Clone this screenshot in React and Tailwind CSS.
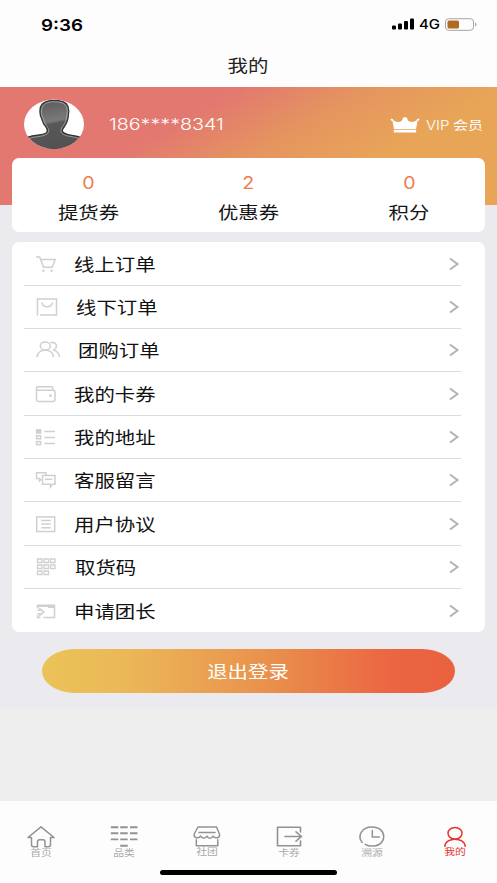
import React from 'react';

const coupons = [
  { label: '提货券', count: 0 },
  { label: '优惠券', count: 2 },
  { label: '积分', count: 0 },
];

const menuItems = [
  {
    label: '线上订单',
    indent: 'ml-[12px]',
    icon: (
      <>
        <path d="M2 4h3.7l3.8 10.3h9.2M6.7 6.5h14.5l-2.8 7.5" />
        <circle cx="9.4" cy="17.7" r="1.2" fill="currentColor" stroke="none" />
        <circle cx="17.6" cy="17.7" r="1.2" fill="currentColor" stroke="none" />
      </>
    ),
  },
  {
    label: '线下订单',
    indent: 'ml-[14px]',
    icon: <path d="M3.5 19.5V3h19v16H6M7.700 6.500c1.600 5.700 9.400 5.700 11 0" />,
  },
  {
    label: '团购订单',
    indent: 'ml-[16px]',
    icon: (
      <>
        <ellipse cx="11.3" cy="6.9" rx="5" ry="4" />
        <path d="M3 18.2c.6-9.7 15.8-9.7 16.6 0M16.5 3.6c7.3-1.3 7.6 6.3 2.6 7.2 3.5 1 6 3.4 6.6 7.4" />
      </>
    ),
  },
  {
    label: '我的卡券',
    indent: 'ml-[12px]',
    icon: (
      <>
        <path d="M2.5 7V5q0-1.300 1.500-1.300h13.500q1.300 0 1.300 1.300v2.200M2.500 7.200h17q1.500 0 1.500 1.300v8.600q0 1.300-1.500 1.300H4q-1.500 0-1.500-1.300z" />
        <circle cx="16.4" cy="12.7" r="1.4" fill="currentColor" stroke="none" />
      </>
    ),
  },
  {
    label: '我的地址',
    indent: 'ml-[12px]',
    icon: (
      <>
        <rect x="2.6" y="3.8" width="4" height="3.2" fill="currentColor" />
        <rect x="2.6" y="9.7" width="4" height="3" />
        <rect x="2.6" y="15.6" width="4" height="3" />
        <path d="M10.3 5.500H21M10.300 11.500H21M10.300 17.500H21" />
      </>
    ),
  },
  {
    label: '客服留言',
    indent: 'ml-[12px]',
    icon: (
      <>
        <path d="M7.500 10 5.500 12v-2.500H2.500V3.800h9.500v2.500" />
        <path d="M8.500 6.500H21v8.700h-2.500l-2 2.800v-2.800h-8zM11 10.300h7.500" />
      </>
    ),
  },
  {
    label: '用户协议',
    indent: 'ml-[12px]',
    icon: (
      <>
        <rect x="2.7" y="3.9" width="18" height="14.6" />
        <path d="M7.300 7.500h9.400M7.300 11h9.400M7.300 14.700h9.400" />
      </>
    ),
  },
  {
    label: '取货码',
    indent: 'ml-[13px]',
    icon: (
      <path
        strokeWidth="1.300"
        d="M3.500 3h4.500v3.500H3.500zM10 3h4.500v3.500H10zM16.500 3h4.500v3.500h-4.500zM3.500 9h4.500v3.500H3.500zM10 9h4.500v3.500H10zM16.500 9h4.500v3.500h-4.500zM3.500 15h4.500v3.500H3.500zM10 15h4.500v3.500H10z"
      />
    ),
  },
  {
    label: '申请团长',
    indent: 'ml-[12px]',
    icon: (
      <>
        <path d="M3.500 8.500V5.300h17v12.300H9.500M3.500 6.300h17M14 7.300h6.500M3.500 15v2.600h3" />
        <path d="M3.500 10.300h2.300V8.800l4 3.300-4 3.300v-1.700H3.500" />
      </>
    ),
  },
];

const tabs = [
  {
    label: '首页',
    offset: 'mt-0',
    icon: <path d="M6.500 13.500H3L16 2.800 29 13.500h-3.500v7.300q0 2-2 2H20v-5q0-2-2-2h-3.500q-2 0-2 2v5H8.500q-2 0-2-2z" />,
  },
  {
    label: '品类',
    offset: 'mt-0',
    icon: (
      <path
        strokeWidth="1.900"
        strokeLinecap="butt"
        d="M2.800 3.200h7.500M12.200 3.200h7.500M22 3.200h7.500M2.800 9.300h7.500M12.200 9.300h7.500M22 9.300h7.500M2.800 15.400h7.500M12.200 15.400h7.500M22 15.400h7.500M12.200 21.700h7.500"
      />
    ),
  },
  {
    label: '社团',
    offset: '-mt-px',
    icon: (
      <path d="M7 3h18.500l3 7c1.200 4.200-5 5-6.400 2-1.600 3-5 3-6.200 0-1.400 3-4.900 3-6.300 0-1.500 3-7.500 2.200-6.400-2zM8 8.600h16M5.300 15.700v6.100h21.500v-6.100" />
    ),
  },
  {
    label: '卡券',
    offset: 'mt-0',
    icon: (
      <path strokeWidth="1.600" d="M27.500 8V3.200H4.500v18.600h23V17M12 12.500h16M23 7.800l5.500 4.700-5.500 4.700" />
    ),
  },
  {
    label: '溯源',
    offset: 'mt-0',
    icon: (
      <>
        <path d="M6.200 18.500C1 12 5.500 2.900 16 2.900c15.500 0 15.700 19.200 0 19.200-2.800 0-5-.7-6.800-1.800" />
        <path d="M16.300 6.500v6.400h7" />
      </>
    ),
  },
  {
    label: '我的',
    active: true,
    offset: '-mt-px',
    icon: (
      <>
        <ellipse cx="16" cy="9.300" rx="7" ry="5.800" />
        <path d="M5.800 22.300c1-9.500 19.400-9.500 20.400 0" />
      </>
    ),
  },
];

const StatusBar = () => (
  <div className="flex h-[43px] items-center justify-between pt-[5px] pl-[41px] pr-[20px] text-black">
    <span className="inline-block origin-left scale-x-[1.14] pt-[2px] font-['Inter'] text-[16.5px] font-semibold leading-none">
      9:36
    </span>
    <div className="flex items-center">
      <svg width="23" height="12" viewBox="0 0 23 12" fill="currentColor">
        <rect x="0" y="7.5" width="4" height="4" rx="1" />
        <rect x="6" y="5.5" width="4" height="6" rx="1" />
        <rect x="12" y="3" width="4" height="8.5" rx="1" />
        <rect x="18" y="0.5" width="4" height="11" rx="1" />
      </svg>
      <span className="ml-[4px] flex w-[26px] items-center">
        <span className="inline-block origin-left scale-x-[1.15] font-['Inter'] text-[13px] font-medium leading-none">
          4G
        </span>
      </span>
      <svg width="32" height="13" viewBox="0 0 32 13">
        <rect x="0.5" y="0.7" width="28" height="11.6" rx="3.2" fill="none" stroke="#a5a5a5" />
        <rect x="2.5" y="2.5" width="11.5" height="8" rx="1.5" fill="#b06b22" />
        <path d="M30 4.500q3 2 0 4z" fill="#a5a5a5" />
      </svg>
    </div>
  </div>
);

const Avatar = () => (
  <svg width="60" height="50" viewBox="0 0 60 50" className="shrink-0">
    <defs>
      <clipPath id="avatar-clip">
        <ellipse cx="30" cy="25.2" rx="30" ry="24.7" />
      </clipPath>
      <linearGradient id="avatar-head" x1="0.3" y1="0" x2="0.5" y2="1">
        <stop offset="0" stopColor="#5a5a5a" />
        <stop offset="0.44" stopColor="#7a7a7a" />
        <stop offset="0.5" stopColor="#585858" />
        <stop offset="1" stopColor="#525252" />
      </linearGradient>
    </defs>
    <g clipPath="url(#avatar-clip)">
      <rect width="60" height="50" fill="#fff" />
      <path
        d="M3 38.5C10 35 20 37 22.800 33C24.500 30.500 22.500 28.500 20 25.500C18.500 23 18 19.500 16.500 17C14 6 19 1.300 30.500 1.300S46 6 44.500 15C44.300 20 43 24 40.500 27.500C38 30.500 37.500 32 39.500 33.500C43 37 51 35.500 57 38.500V50H3z"
        fill="url(#avatar-head)"
        stroke="#333"
        strokeWidth="1.2"
      />
      <path
        d="M5 39.500C12 37 21 38 24 34C26 31 23.500 28 21.300 25C19.500 22 19.500 18.500 18 16.500C16 7 20 2.800 30.500 2.800S44.300 7 43 15C42.800 20 41.500 23.500 39.300 26.500C36.500 30 36 33 38.500 34.700C42 38 49 37 55 39.500"
        fill="none"
        stroke="#b5b5b5"
        strokeWidth="0.7"
      />
    </g>
  </svg>
);

const Crown = () => (
  <svg width="30" height="16" viewBox="0 0 30 16" fill="#fff">
    <path d="M4 12 2.500 4C-.3 3.200.2 1.300 2 1.800c1.300.2 1.300 1 1.300 1.500C5.500 5.300 9 5.200 10.500 4.500c1.300-.7 2-1.500 2-2.300 0-2.500 5-2.500 5 0 0 .8.700 1.600 2 2.300 1.500.7 5 .8 7.200-1.200 0-.5 0-1.300 1.300-1.500 1.800-.5 2.300 1.400-.5 2.200L26 12zM3.800 12.800h22.400v2.600H3.800z" />
  </svg>
);

const ProfileHeader = () => (
  <div className="-mb-[47px] h-[118px] bg-[linear-gradient(150deg,#e27870_0%,#e27870_34%,#e5955f_53%,#e8a558_72%,#e8a558_100%)]">
    <div className="flex items-start pl-[24px] pr-[14px] pt-[12px] text-white">
      <Avatar />
      <span className="ml-[25px] mt-[17px] inline-block origin-left scale-x-[1.23] font-['Inter','Liberation_Sans',sans-serif] text-[16px] font-light leading-none">
        186****8341
      </span>
      <div className="ml-auto flex items-center pt-[18px]">
        <Crown />
        <span className="ml-[6px] flex w-[57px] items-center whitespace-nowrap pt-[2px]">
          <span className="inline-block origin-left scale-x-[1.2] font-['Inter','Noto_Sans_CJK_SC',sans-serif] text-[12.5px] font-light leading-none">
            VIP<span className="ml-[3px] text-[12.5px] font-normal">会员</span>
          </span>
        </span>
      </div>
    </div>
  </div>
);

const CouponCard = () => (
  <div className="relative mx-[12px] grid h-[74px] grid-cols-[152px_1fr_152px] rounded-[7px] bg-white pt-[16px] text-center">
    {coupons.map((item) => (
      <div key={item.label} className="flex flex-col items-center">
        <span className="inline-block scale-x-[1.15] font-['Inter'] text-[17px] leading-[18px] text-[#ec7d50]">
          {item.count}
        </span>
        <span className="mt-[8px] inline-block scale-x-[1.2] text-[17px] leading-[24px] text-[#151515]">
          {item.label}
        </span>
      </div>
    ))}
  </div>
);

const MenuList = () => (
  <div className="mx-[12px] mt-[10px] h-[390px] rounded-[7px] bg-white pl-[12px] pr-[24px] pt-[0.5px]">
    {menuItems.map((item) => (
      <div
        key={item.label}
        className="flex h-[43.330px] items-center border-b border-[#dcdcde] pl-[10px] pr-[1px] last:border-b-0"
      >
        <svg
          width="28"
          height="22"
          viewBox="0 0 28 22"
          fill="none"
          stroke="currentColor"
          strokeWidth="1.5"
          className="shrink-0 text-[#d0d0d0]"
        >
          {item.icon}
        </svg>
        <span className={`inline-block origin-left scale-x-[1.2] text-[17px] leading-[24px] text-[#111] ${item.indent}`}>
          {item.label}
        </span>
        <svg
          width="12"
          height="14"
          viewBox="0 0 12 14"
          fill="none"
          stroke="#b3b3b3"
          strokeWidth="2"
          className="ml-auto shrink-0"
        >
          <path d="m2 1.500 7.500 5.500L2 12.500" />
        </svg>
      </div>
    ))}
  </div>
);

const TabBar = () => (
  <div className="h-[82px] bg-[#fdfdfd]">
    <div className="mr-[1px] grid h-[69px] grid-cols-6 pt-[23px]">
      {tabs.map((tab) => (
        <div
          key={tab.label}
          className={`flex flex-col items-center ${tab.active ? 'text-[#e3332d]' : 'text-[#929292]'}`}
        >
          <svg
            width="32"
            height="24"
            viewBox="0 0 32 24"
            fill="none"
            stroke="currentColor"
            strokeWidth="1.5"
            strokeLinejoin="round"
            strokeLinecap="round"
          >
            {tab.icon}
          </svg>
          <span
            className={`inline-block scale-x-[1.2] text-[9px] leading-[10px] ${tab.offset} ${
              tab.active ? '' : 'text-[#aaa]'
            }`}
          >
            {tab.label}
          </span>
        </div>
      ))}
    </div>
    <div className="mx-auto h-[5px] w-[177px] rounded-full bg-black" />
  </div>
);

const App = () => {
  return (
    <div className="flex h-[883px] w-[497px] flex-col overflow-hidden bg-[#eeeeee] font-['Noto_Sans_CJK_SC',sans-serif]">
      <div className="h-[87px] bg-[#fdfdfd]">
        <StatusBar />
        <h1 className="flex h-[44px] items-center justify-center pr-[2px] text-[17px] text-[#222]">
          <span className="inline-block scale-x-[1.2]">我的</span>
        </h1>
      </div>

      <div className="h-[621px] bg-[#eaeaef]">
        <ProfileHeader />
        <CouponCard />
        <MenuList />
        <button className="ml-[42px] mt-[17px] flex h-[44px] w-[413px] items-center justify-center rounded-[33px/22px] bg-[linear-gradient(90deg,#ebc358_0%,#ebb858_20%,#e9934d_53%,#eb6542_85%,#ea6140_100%)] pr-[2px] text-[17px] text-white">
          <span className="inline-block scale-x-[1.2]">退出登录</span>
        </button>
      </div>

      <div className="mt-auto">
        <TabBar />
      </div>
    </div>
  );
};

export default App;
